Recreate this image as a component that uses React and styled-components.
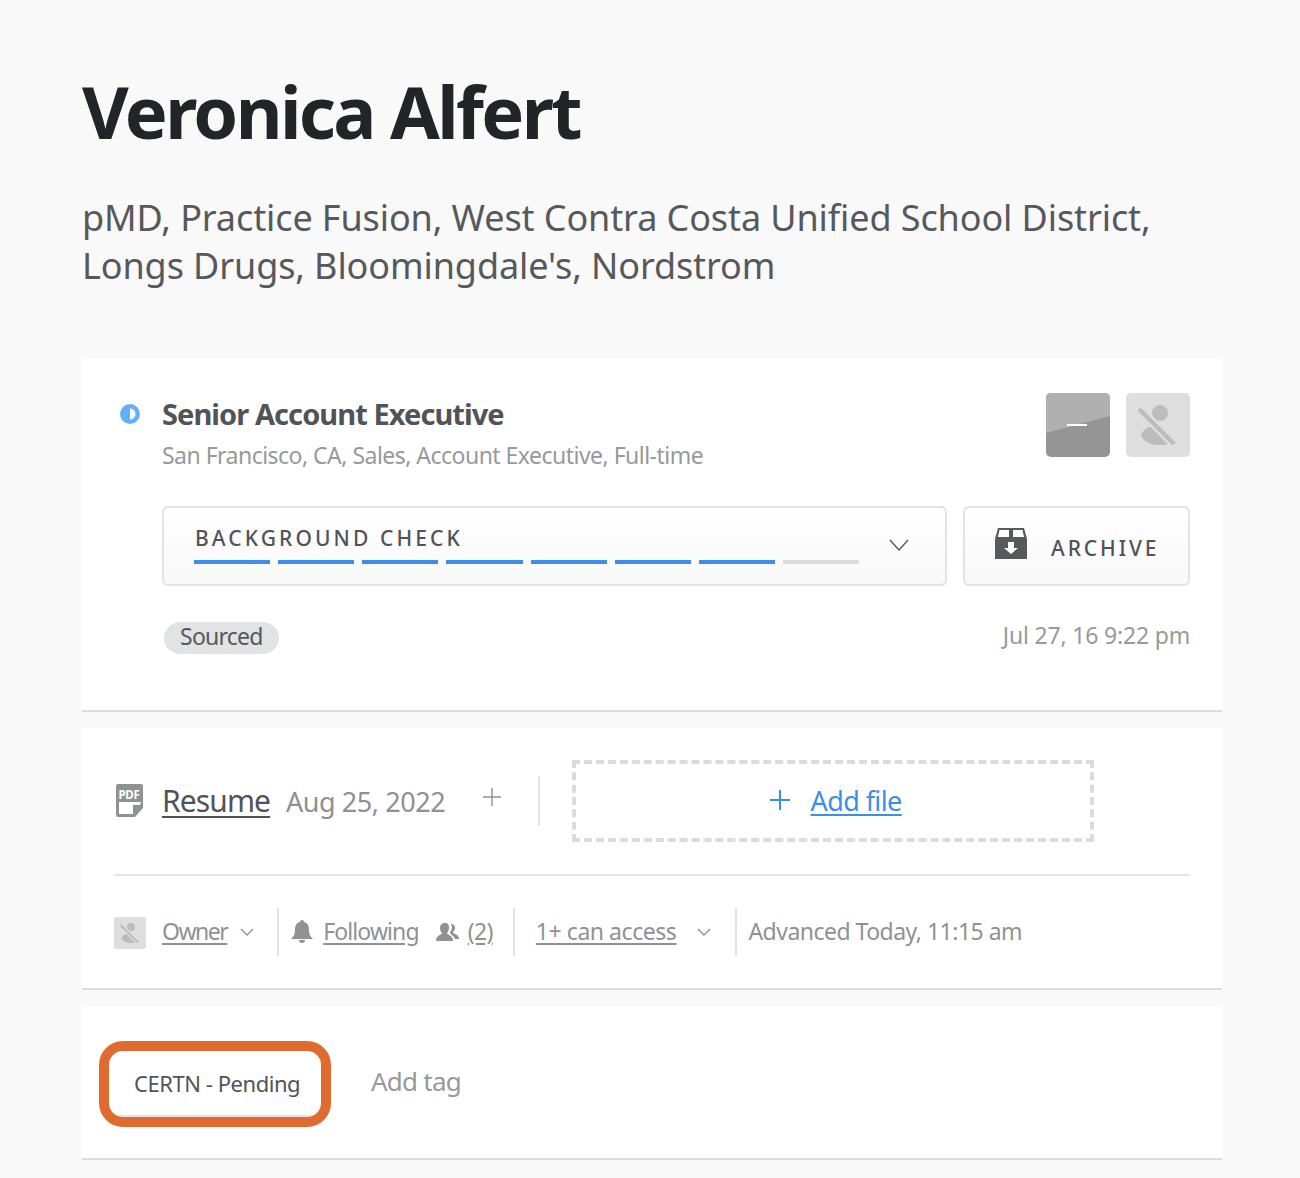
import styled, { createGlobalStyle } from 'styled-components';

const GlobalStyle = createGlobalStyle`
html, body {
  margin: 0;
  padding: 0;
  background: #f9f9f9;
}
body {
  font-family: "Noto Sans", "Open Sans", sans-serif;
  color: #515257;
}
`;

const STAGES = [true, true, true, true, true, true, true, false];

const Page = styled.div`
  width: 1300px;
  height: 1178px;
  box-sizing: border-box;
  padding: 0 78px 0 82px;
  overflow: hidden;
`;

const Name = styled.h1`
  margin: 0;
  padding-top: 65px;
  font-size: 72px;
  line-height: 92px;
  font-weight: 700;
  letter-spacing: -2.6px;
  color: #222428;
`;

const Companies = styled.p`
  margin: 37px 0 0;
  font-size: 36px;
  line-height: 48px;
  letter-spacing: -0.1px;
  color: #57585c;
  max-width: 1100px;
`;

const Card = styled.section`
  background: #fff;
  border-bottom: 2px solid #dcdcdc;
  margin-top: ${(p) => p.$gap}px;
  box-sizing: border-box;
  height: ${(p) => p.$height}px;
`;

const JobCard = styled(Card)`
  padding: 35px 32px 0 38px;
  display: grid;
  grid-template-columns: 42px 1fr;
  align-content: start;
`;

const Status = styled.svg`
  width: 20px;
  height: 20px;
  margin-top: 11px;
`;

const JobBody = styled.div`
  display: flex;
  flex-direction: column;
`;

const JobHeader = styled.div`
  display: flex;
  justify-content: space-between;
  height: 113px;
`;

const JobTitle = styled.h2`
  margin: 0;
  font-size: 29px;
  line-height: 42px;
  font-weight: 700;
  letter-spacing: -0.93px;
  color: #525357;
`;

const JobMeta = styled.p`
  margin: 0;
  font-size: 23px;
  line-height: 40px;
  letter-spacing: -0.52px;
  color: #98999b;
`;

const Avatars = styled.div`
  display: flex;
  gap: 16px;
`;

const AvatarBox = styled.svg`
  display: block;
  width: ${(p) => p.$size}px;
  height: ${(p) => p.$size}px;
  flex: none;
  margin-top: ${(p) => p.$offset || 0}px;
`;

const Controls = styled.div`
  display: flex;
  gap: 16px;
`;

const Boxed = styled.div`
  box-sizing: border-box;
  height: 80px;
  border: 2px solid #e3e3e4;
  border-radius: 6px;
  background: linear-gradient(#fff, #f8f8f8);
`;

const StageSelect = styled(Boxed)`
  flex: 1;
  padding: 16px 0 0 30px;
  display: flex;
  align-items: flex-start;
  justify-content: space-between;
`;

const StageInfo = styled.div`
  width: 665px;
`;

const StageName = styled.div`
  font-size: 21px;
  line-height: 28px;
  font-weight: 500;
  letter-spacing: 3.1px;
  color: #525357;
  padding-left: 1px;
`;

const Segments = styled.div`
  display: grid;
  grid-template-columns: repeat(8, 1fr);
  gap: 8px;
  margin-top: 8px;
`;

const Segment = styled.div`
  height: 4px;
  background: ${(p) => (p.$done ? '#3d8eea' : '#dcdcdc')};
`;

const Chevron = styled.svg`
  width: ${(p) => p.$w}px;
  height: ${(p) => p.$h}px;
  flex: none;
  fill: none;
  stroke: ${(p) => p.$color};
  stroke-width: 1.4;
`;

const StageChevron = styled(Chevron)`
  margin: 15px 36px 0 0;
`;

const ArchiveButton = styled(Boxed)`
  width: 227px;
  display: flex;
  align-items: center;
  padding: 4px 0 0 30px;
  gap: 24px;
  font-size: 21px;
  font-weight: 500;
  letter-spacing: 2.9px;
  color: #525357;
`;

const ArchiveIcon = styled.svg`
  width: 32px;
  height: 32px;
  flex: none;
  margin-top: -10px;
`;

const JobFooter = styled.div`
  display: flex;
  justify-content: space-between;
  align-items: center;
  margin-top: 33px;
  padding-left: 2px;
`;

const Pill = styled.span`
  display: inline-block;
  height: 32px;
  line-height: 29px;
  padding: 0 16px;
  border-radius: 16px;
  background: #e2e3e5;
  font-size: 23px;
  letter-spacing: -0.75px;
  color: #57585c;
`;

const Stamp = styled.span`
  font-size: 23px;
  letter-spacing: -0.18px;
  color: #98999b;
  padding-bottom: 5px;
`;

const FileCard = styled(Card)`
  padding: 32px 32px 0;
`;

const FileRow = styled.div`
  display: flex;
  align-items: center;
  height: 82px;
  padding-bottom: 32px;
  border-bottom: 2px solid #e6e6e6;
`;

const PdfIcon = styled.svg`
  width: 30px;
  height: 34px;
  flex: none;
  margin: 0 17px 0 1px;
`;

const ResumeLink = styled.a`
  font-size: 30px;
  letter-spacing: -0.9px;
  color: #515257;
  text-decoration: underline;
  text-decoration-thickness: 2px;
  text-underline-offset: 4px;
  margin-top: -2px;
`;

const FileDate = styled.span`
  font-size: 27px;
  letter-spacing: -0.45px;
  color: #8f9093;
  margin-left: 16px;
`;

const PlusIcon = styled.svg`
  width: ${(p) => p.$size}px;
  height: ${(p) => p.$size}px;
  flex: none;
  stroke: ${(p) => p.$color};
  stroke-width: ${(p) => p.$stroke};
  fill: none;
`;

const FilePlus = styled(PlusIcon)`
  margin: -8px 37px 0 38px;
`;

const Rule = styled.div`
  width: 2px;
  height: ${(p) => p.$height}px;
  background: #e2e2e2;
  flex: none;
  margin-left: ${(p) => p.$left || 0}px;
`;

const DropZone = styled.div`
  box-sizing: border-box;
  width: 522px;
  height: 82px;
  margin-left: 32px;
  border: 4px dashed #dbdbdb;
  display: flex;
  align-items: center;
  justify-content: center;
  gap: 21px;
  padding: 0 0 2px 5px;
`;

const AddFile = styled.a`
  font-size: 27px;
  letter-spacing: -0.6px;
  color: #3d8eea;
  text-decoration: underline;
  text-underline-offset: 3px;
`;

const MetaRow = styled.div`
  display: flex;
  align-items: center;
  height: 48px;
  margin-top: 32px;
  font-size: 23px;
  letter-spacing: -0.52px;
  color: #909194;
`;

const MetaLink = styled.a`
  color: #909194;
  text-decoration: underline;
  text-underline-offset: 3px;
  margin-left: ${(p) => p.$left || 0}px;
  padding-bottom: 3px;
  letter-spacing: ${(p) => p.$spacing ?? -0.6}px;
`;

const MetaChevron = styled(Chevron)`
  margin: 0 ${(p) => p.$right}px 0 ${(p) => p.$left}px;
`;

const MetaIcon = styled.svg`
  width: ${(p) => p.$w}px;
  height: ${(p) => p.$h}px;
  flex: none;
  margin-left: ${(p) => p.$left}px;
  fill: #909194;
`;

const Advanced = styled.span`
  margin-left: 11px;
  padding-bottom: 3px;
  white-space: nowrap;
`;

const TagCard = styled(Card)`
  padding: 4px 0 0 17px;
  display: flex;
  align-items: center;
`;

const Tag = styled.div`
  box-sizing: border-box;
  width: 232px;
  height: 86px;
  border: 10px solid #e06b31;
  border-radius: 24px;
  background: linear-gradient(#fff 97%, #e4e4e4 97%);
  display: flex;
  align-items: center;
  padding: 0 0 2px 25px;
  font-size: 22px;
  letter-spacing: -0.45px;
  color: #525357;
  white-space: nowrap;
`;

const AddTag = styled.span`
  margin: -6px 0 0 40px;
  font-size: 26px;
  letter-spacing: -0.75px;
  color: #98999b;
`;

const NoOwnerAvatar = ({ size, offset }) => (
  <AvatarBox $size={size} $offset={offset} viewBox="0 0 64 64">
    <rect width="64" height="64" rx="5" fill="#dedede" />
    <circle cx="34" cy="20" r="8" fill="#bcbcbc" />
    <path d="M15 42c2-6 9-9 14-9 7 0 13 6 18 16-3 2-7 3-13 3-9 0-17-3-19-10z" fill="#bcbcbc" />
    <path d="M12 15 49 52" stroke="#dedede" strokeWidth="9" />
    <path d="M13 16 48 51" stroke="#bcbcbc" strokeWidth="4" />
  </AvatarBox>
);

const DashAvatar = () => (
  <AvatarBox $size={64} viewBox="0 0 64 64">
    <rect width="64" height="64" rx="5" fill="#959596" />
    <path d="M0 40 64 23V5a5 5 0 0 0-5-5H5a5 5 0 0 0-5 5z" fill="#b0b0b1" />
    <rect x="21" y="31" width="20" height="2" fill="#fff" />
  </AvatarBox>
);

const Plus = ({ size, color, stroke, as: Comp = PlusIcon }) => (
  <Comp $size={size} $color={color} $stroke={stroke} viewBox={`0 0 ${size} ${size}`}>
    <path d={`M${size / 2} 0V${size}M0 ${size / 2}H${size}`} />
  </Comp>
);

export default function App() {
  return (
    <Page>
      <GlobalStyle />
      <Name>Veronica Alfert</Name>
      <Companies>
        pMD, Practice Fusion, West Contra Costa Unified School District, Longs Drugs, Bloomingdale's, Nordstrom
      </Companies>

      <JobCard $gap={68} $height={354}>
        <Status viewBox="0 0 20 20">
          <circle cx="10" cy="10" r="10" fill="#64b0f8" />
          <path d="M10 4.500a5.500 5.500 0 0 1 0 11z" fill="#fff" />
        </Status>
        <JobBody>
          <JobHeader>
            <div>
              <JobTitle>Senior Account Executive</JobTitle>
              <JobMeta>San Francisco, CA, Sales, Account Executive, Full-time</JobMeta>
            </div>
            <Avatars>
              <DashAvatar />
              <NoOwnerAvatar size={64} />
            </Avatars>
          </JobHeader>
          <Controls>
            <StageSelect>
              <StageInfo>
                <StageName>BACKGROUND CHECK</StageName>
                <Segments>
                  {STAGES.map((done, i) => <Segment key={i} $done={done} />)}
                </Segments>
              </StageInfo>
              <StageChevron $w={20} $h={12} $color="#57585c" viewBox="0 0 20 12">
                <path d="M1 1 10 11 19 1" />
              </StageChevron>
            </StageSelect>
            <ArchiveButton>
              <ArchiveIcon viewBox="0 0 32 32">
                <path d="M0 12 3 1h26l3 11v20H0z" fill="#58595b" />
                <path d="M4.500 3h9.500v7H3zM18 3h9.500l1.500 7H18z" fill="#fff" />
                <path d="M13 15h6v6h4l-7 6-7-6h4z" fill="#fff" />
              </ArchiveIcon>
              ARCHIVE
            </ArchiveButton>
          </Controls>
          <JobFooter>
            <Pill>Sourced</Pill>
            <Stamp>Jul 27, 16 9:22 pm</Stamp>
          </JobFooter>
        </JobBody>
      </JobCard>

      <FileCard $gap={16} $height={262}>
        <FileRow>
          <PdfIcon viewBox="0 0 30 34">
            <path d="M3 0h23a2 2 0 0 1 2 2v22l-8 9H3a2 2 0 0 1-2-2V2a2 2 0 0 1 2-2z" fill="#909193" />
            <path d="M4 18h22l-1 3h-7v9H4z" fill="#fff" />
            <text x="3.500" y="14.500" fontSize="11.500" fontWeight="700" letterSpacing="-0.3" fill="#fff" fontFamily="Noto Sans, sans-serif">PDF</text>
          </PdfIcon>
          <ResumeLink>Resume</ResumeLink>
          <FileDate>Aug 25, 2022</FileDate>
          <Plus size={18} color="#8f9093" stroke={1.4} as={FilePlus} />
          <Rule $height={50} />
          <DropZone>
            <Plus size={20} color="#3d8eea" stroke={2} />
            <AddFile>Add file</AddFile>
          </DropZone>
        </FileRow>
        <MetaRow>
          <NoOwnerAvatar size={32} offset={2} />
          <MetaLink $left={16} $spacing={-1.5}>Owner</MetaLink>
          <MetaChevron $w={14} $h={8} $left={13} $right={23} $color="#909194" viewBox="0 0 14 8">
            <path d="M1 1 7 7 13 1" />
          </MetaChevron>
          <Rule $height={48} />
          <MetaIcon $w={22} $h={24} $left={12} viewBox="0 0 22 24">
            <path d="M11 0a2 2 0 0 1 2 2c4 1 5 4 5 8 0 4 1 6 4 9H0c3-3 4-5 4-9 0-4 1-7 5-8a2 2 0 0 1 2-2zM8 20h6a3 3 0 0 1-6 0z" />
          </MetaIcon>
          <MetaLink $left={10} $spacing={-0.9}>Following</MetaLink>
          <MetaIcon $w={23} $h={18} $left={17} viewBox="0 0 23 18">
            <path d="M9 0c3 0 4 2 4 5 0 2-1 4-2 5 0 2 6 2 6 8H0c0-6 6-6 6-8-1-1-2-3-2-5 0-3 2-5 5-5z" />
            <path d="M15 1c3 0 4 2 4 4 0 2-1 3-2 4 0 2 6 2 6 7h-4c-1-4-5-4-5-7 1-1 2-3 2-5 0-1-1-2-1-3z" />
          </MetaIcon>
          <MetaLink $left={9}>(2)</MetaLink>
          <Rule $height={48} $left={20} />
          <MetaLink $left={21} $spacing={-0.45}>1+ can access</MetaLink>
          <MetaChevron $w={14} $h={8} $left={21} $right={24} $color="#909194" viewBox="0 0 14 8">
            <path d="M1 1 7 7 13 1" />
          </MetaChevron>
          <Rule $height={48} />
          <Advanced>Advanced Today, 11:15 am</Advanced>
        </MetaRow>
      </FileCard>

      <TagCard $gap={16} $height={154}>
        <Tag>CERTN - Pending</Tag>
        <AddTag>Add tag</AddTag>
      </TagCard>
    </Page>
  );
}
